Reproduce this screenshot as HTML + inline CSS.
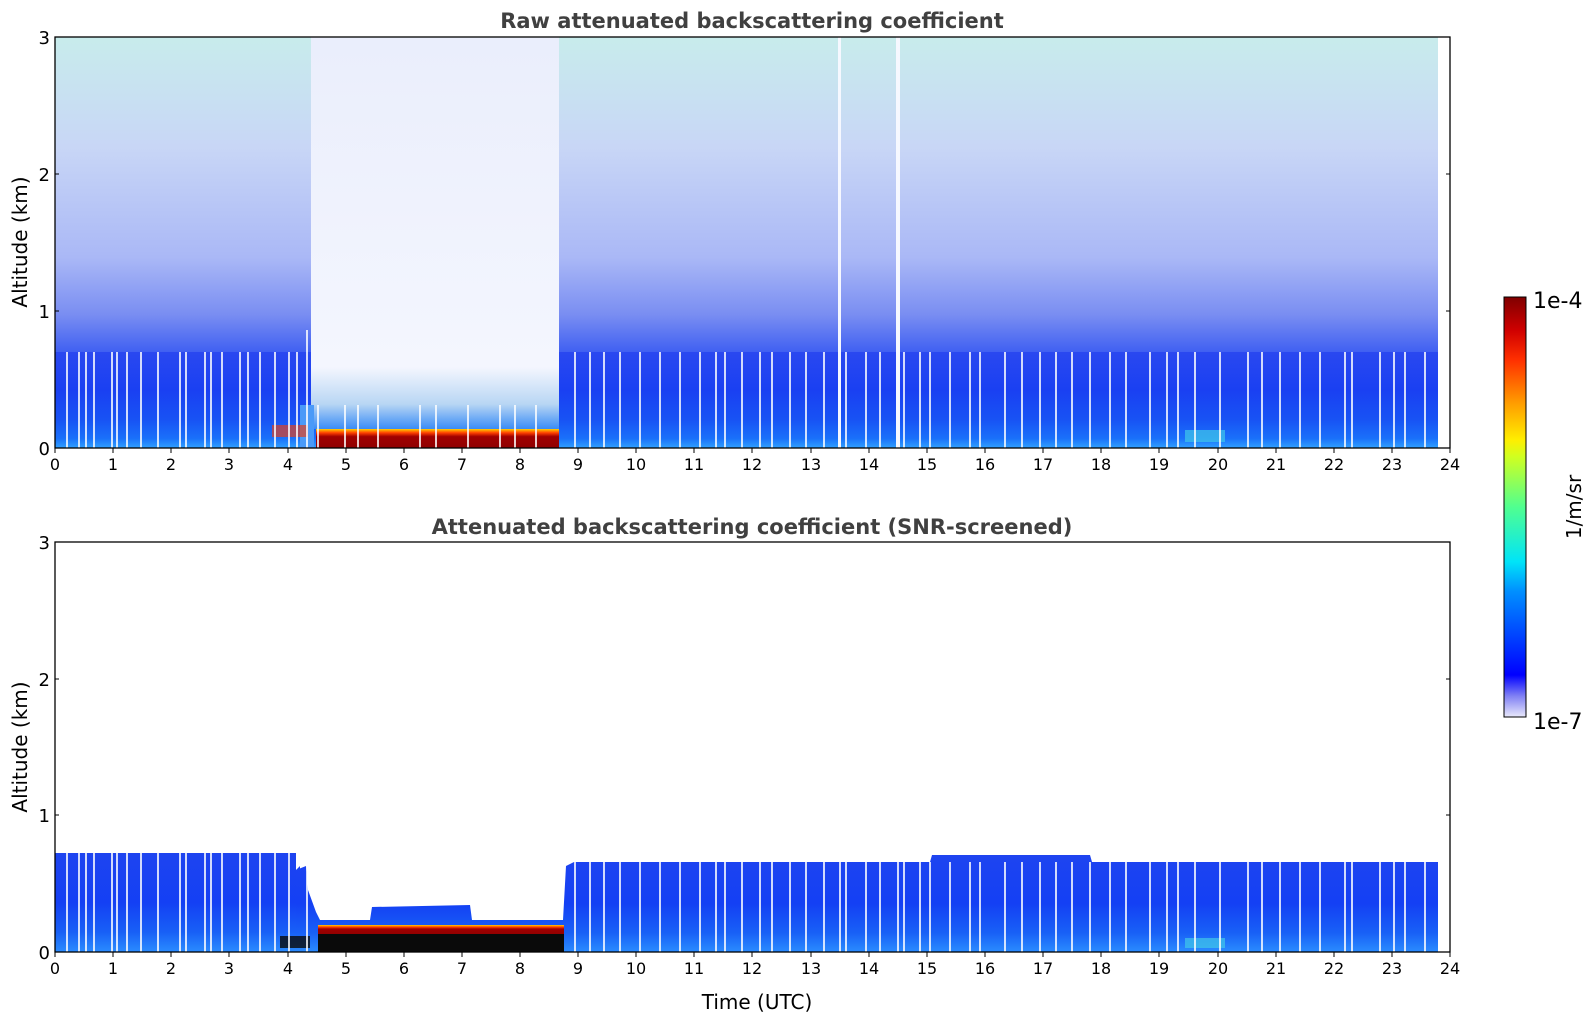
<!DOCTYPE html>
<html><head><meta charset="utf-8"><style>
html,body{margin:0;padding:0;background:#fff;width:1595px;height:1020px;overflow:hidden}
svg text{font-family:"DejaVu Sans","Liberation Sans",sans-serif;fill:#000}
</style></head><body>
<svg width="1595" height="1020" viewBox="0 0 1595 1020" xmlns="http://www.w3.org/2000/svg">
<defs>
<linearGradient id="up" x1="0" y1="0" x2="0" y2="1">
<stop offset="0" stop-color="#c8ecec"/>
<stop offset="0.35" stop-color="#c8d6f6"/>
<stop offset="0.7" stop-color="#aab8f6"/>
<stop offset="0.88" stop-color="#7a8ef2"/>
<stop offset="1" stop-color="#4060f2"/>
</linearGradient>
<linearGradient id="low" x1="0" y1="0" x2="0" y2="1">
<stop offset="0" stop-color="#2a48f0"/>
<stop offset="0.4" stop-color="#1a40f2"/>
<stop offset="0.7" stop-color="#1852f4"/>
<stop offset="0.9" stop-color="#1a70fa"/>
<stop offset="1" stop-color="#30a0ff"/>
</linearGradient>
<linearGradient id="gapup" x1="0" y1="0" x2="0" y2="1">
<stop offset="0" stop-color="#eaeefc"/>
<stop offset="1" stop-color="#f4f6fe"/>
</linearGradient>
<linearGradient id="gaplow" x1="0" y1="0" x2="0" y2="1">
<stop offset="0" stop-color="#f4f6fe"/>
<stop offset="0.6" stop-color="#b8d6f4"/>
<stop offset="1" stop-color="#3a8cf6"/>
</linearGradient>
<linearGradient id="red" x1="0" y1="0" x2="0" y2="1">
<stop offset="0" stop-color="#ffd000"/>
<stop offset="0.2" stop-color="#ff4000"/>
<stop offset="0.4" stop-color="#a00000"/>
<stop offset="1" stop-color="#900000"/>
</linearGradient>
<linearGradient id="cb" x1="0" y1="1" x2="0" y2="0">
<stop offset="0" stop-color="#e8e8fa"/>
<stop offset="0.05" stop-color="#8080f4"/>
<stop offset="0.1" stop-color="#0000ff"/>
<stop offset="0.3" stop-color="#0090ff"/>
<stop offset="0.37" stop-color="#00e4f8"/>
<stop offset="0.5" stop-color="#50ff90"/>
<stop offset="0.62" stop-color="#d0ff20"/>
<stop offset="0.66" stop-color="#ffee00"/>
<stop offset="0.75" stop-color="#ff9a00"/>
<stop offset="0.85" stop-color="#ff3000"/>
<stop offset="0.92" stop-color="#d00000"/>
<stop offset="1" stop-color="#800000"/>
</linearGradient>
<linearGradient id="blow" x1="0" y1="0" x2="0" y2="1">
<stop offset="0" stop-color="#1e44f0"/>
<stop offset="0.5" stop-color="#1440f4"/>
<stop offset="0.8" stop-color="#1860f6"/>
<stop offset="1" stop-color="#2a8cff"/>
</linearGradient>
</defs>

<!-- TOP PLOT -->
<text x="752" y="28" text-anchor="middle" font-size="21" font-weight="bold" style="fill:#404040">Raw attenuated backscattering coefficient</text>
<rect x="55" y="37" width="1383" height="315" fill="url(#up)"/>
<rect x="55" y="352" width="1383" height="96" fill="url(#low)"/>
<rect x="311" y="37" width="248" height="330" fill="url(#gapup)"/>
<rect x="311" y="367" width="248" height="62" fill="url(#gaplow)"/>
<rect x="300" y="405" width="14" height="43" fill="#4a9af8"/>
<rect x="316" y="429" width="243" height="19" fill="url(#red)"/>
<rect x="272" y="425" width="36" height="12" fill="#e04020" opacity="0.7"/>
<rect x="1438" y="37" width="12" height="411" fill="#fff"/>
<rect x="838" y="37" width="3" height="411" fill="#f6f8ff"/>
<rect x="896" y="37" width="4" height="411" fill="#f6f8ff"/>
<rect x="1185" y="430" width="40" height="12" fill="#40c8e8" opacity="0.7"/>
<g stroke="#fff" stroke-width="1.6">
<path d="M67 352V448M79 352V448M86 352V448M94 352V448M112 352V448M117 352V448M127 352V448M141 352V448M158 352V448M180 352V448M186 352V448M205 352V448M211 352V448M222 352V448M240 352V448M248 352V448M260 352V448M275 352V448M289 352V448M297 352V448M307 330V448"/>
<path d="M318 405V448M345 405V448M358 405V448M378 405V448M420 405V448M436 405V448M468 405V448M500 405V448M515 405V448M536 405V448"/>
<path d="M575 352V448M590 352V448M604 352V448M620 352V448M640 352V448M660 352V448M680 352V448M700 352V448M716 352V448M725 352V448M742 352V448M760 352V448M772 352V448M790 352V448M806 352V448M824 352V448M846 352V448M866 352V448M880 352V448M904 352V448M920 352V448M930 352V448M950 352V448M970 352V448M980 352V448M1005 352V448M1022 352V448M1040 352V448M1056 352V448M1072 352V448M1090 352V448M1110 352V448M1126 352V448M1150 352V448M1167 352V448M1178 352V448M1195 352V448M1220 352V448M1248 352V448M1262 352V448M1280 352V448M1300 352V448M1320 352V448M1345 352V448M1352 352V448M1380 352V448M1394 352V448M1405 352V448M1425 352V448"/>
</g>
<rect x="55" y="37" width="1395" height="411" fill="none" stroke="#000" stroke-width="1.3"/>
<g stroke="#000" stroke-width="1">
<path d="M55 448v5M113 448v5M171 448v5M229 448v5M288 448v5M346 448v5M404 448v5M462 448v5M520 448v5M578 448v5M636 448v5M694 448v5M752 448v5M811 448v5M869 448v5M927 448v5M985 448v5M1043 448v5M1101 448v5M1159 448v5M1218 448v5M1276 448v5M1334 448v5M1392 448v5M1450 448v5"/>
<path d="M55 311h4M55 174h4M1450 311h-4M1450 174h-4"/>
</g>
<g font-size="16" text-anchor="middle">
<text x="55" y="470">0</text><text x="113" y="470">1</text><text x="171" y="470">2</text><text x="229" y="470">3</text><text x="288" y="470">4</text><text x="346" y="470">5</text><text x="404" y="470">6</text><text x="462" y="470">7</text><text x="520" y="470">8</text><text x="578" y="470">9</text><text x="636" y="470">10</text><text x="694" y="470">11</text><text x="752" y="470">12</text><text x="811" y="470">13</text><text x="869" y="470">14</text><text x="927" y="470">15</text><text x="985" y="470">16</text><text x="1043" y="470">17</text><text x="1101" y="470">18</text><text x="1159" y="470">19</text><text x="1218" y="470">20</text><text x="1276" y="470">21</text><text x="1334" y="470">22</text><text x="1392" y="470">23</text><text x="1450" y="470">24</text>
</g>
<g font-size="18" text-anchor="end">
<text x="50" y="455">0</text><text x="50" y="318">1</text><text x="50" y="181">2</text><text x="50" y="44">3</text>
</g>
<text transform="translate(27 242) rotate(-90)" text-anchor="middle" font-size="20">Altitude (km)</text>

<!-- BOTTOM PLOT -->
<text x="752" y="534" text-anchor="middle" font-size="21" font-weight="bold" style="fill:#404040">Attenuated backscattering coefficient (SNR-screened)</text>
<path d="M55 853H296V870L300 866V952H55Z" fill="url(#blow)"/>
<path d="M296 870 L306 866 L308 890 L316 912 L320 920 L370 920 L372 907 L470 905 L472 920 L563 920 L566 866 L574 862 L930 862 L932 855 L1090 855 L1092 862 L1438 862 L1438 952 L296 952 Z" fill="url(#blow)"/>
<rect x="318" y="925" width="246" height="10" fill="url(#red)"/>
<rect x="318" y="934" width="246" height="18" fill="#0a0a0a"/>
<rect x="280" y="936" width="30" height="12" fill="#0a0a0a" opacity="0.8"/>
<rect x="1185" y="938" width="40" height="10" fill="#40c8e8" opacity="0.7"/>
<g stroke="#fff" stroke-width="1.6">
<path d="M67 853V952M79 853V952M86 853V952M94 853V952M112 853V952M117 853V952M127 853V952M141 853V952M158 853V952M180 853V952M186 853V952M205 853V952M211 853V952M222 853V952M240 853V952M248 853V952M260 853V952M275 853V952M289 853V952M307 866V952"/>
<path d="M575 862V952M590 862V952M604 862V952M620 862V952M640 862V952M660 862V952M680 862V952M700 862V952M716 862V952M725 862V952M742 862V952M760 862V952M772 862V952M790 862V952M806 862V952M824 862V952M840 862V952M846 862V952M866 862V952M880 862V952M898 862V952M904 862V952M920 862V952M930 862V952M950 862V952M970 862V952M980 862V952M1005 862V952M1022 862V952M1040 862V952M1056 862V952M1072 862V952M1090 862V952M1110 862V952M1126 862V952M1150 862V952M1167 862V952M1178 862V952M1195 862V952M1220 862V952M1248 862V952M1262 862V952M1280 862V952M1300 862V952M1320 862V952M1345 862V952M1352 862V952M1380 862V952M1394 862V952M1405 862V952M1425 862V952"/>
</g>
<rect x="55" y="542" width="1395" height="410" fill="none" stroke="#000" stroke-width="1.3"/>
<g stroke="#000" stroke-width="1">
<path d="M55 952v5M113 952v5M171 952v5M229 952v5M288 952v5M346 952v5M404 952v5M462 952v5M520 952v5M578 952v5M636 952v5M694 952v5M752 952v5M811 952v5M869 952v5M927 952v5M985 952v5M1043 952v5M1101 952v5M1159 952v5M1218 952v5M1276 952v5M1334 952v5M1392 952v5M1450 952v5"/>
<path d="M55 815h4M55 679h4M1450 815h-4M1450 679h-4"/>
</g>
<g font-size="16" text-anchor="middle">
<text x="55" y="974">0</text><text x="113" y="974">1</text><text x="171" y="974">2</text><text x="229" y="974">3</text><text x="288" y="974">4</text><text x="346" y="974">5</text><text x="404" y="974">6</text><text x="462" y="974">7</text><text x="520" y="974">8</text><text x="578" y="974">9</text><text x="636" y="974">10</text><text x="694" y="974">11</text><text x="752" y="974">12</text><text x="811" y="974">13</text><text x="869" y="974">14</text><text x="927" y="974">15</text><text x="985" y="974">16</text><text x="1043" y="974">17</text><text x="1101" y="974">18</text><text x="1159" y="974">19</text><text x="1218" y="974">20</text><text x="1276" y="974">21</text><text x="1334" y="974">22</text><text x="1392" y="974">23</text><text x="1450" y="974">24</text>
</g>
<g font-size="18" text-anchor="end">
<text x="50" y="959">0</text><text x="50" y="822">1</text><text x="50" y="686">2</text><text x="50" y="549">3</text>
</g>
<text transform="translate(27 747) rotate(-90)" text-anchor="middle" font-size="20">Altitude (km)</text>
<text x="757" y="1009" text-anchor="middle" font-size="20">Time (UTC)</text>

<!-- COLORBAR -->
<rect x="1504" y="297" width="22" height="420" fill="url(#cb)" stroke="#000" stroke-width="1"/>
<text x="1533" y="308" font-size="22">1e-4</text>
<text x="1533" y="729" font-size="22">1e-7</text>
<text transform="translate(1581 507) rotate(-90)" text-anchor="middle" font-size="20">1/m/sr</text>
</svg>
</body></html>
